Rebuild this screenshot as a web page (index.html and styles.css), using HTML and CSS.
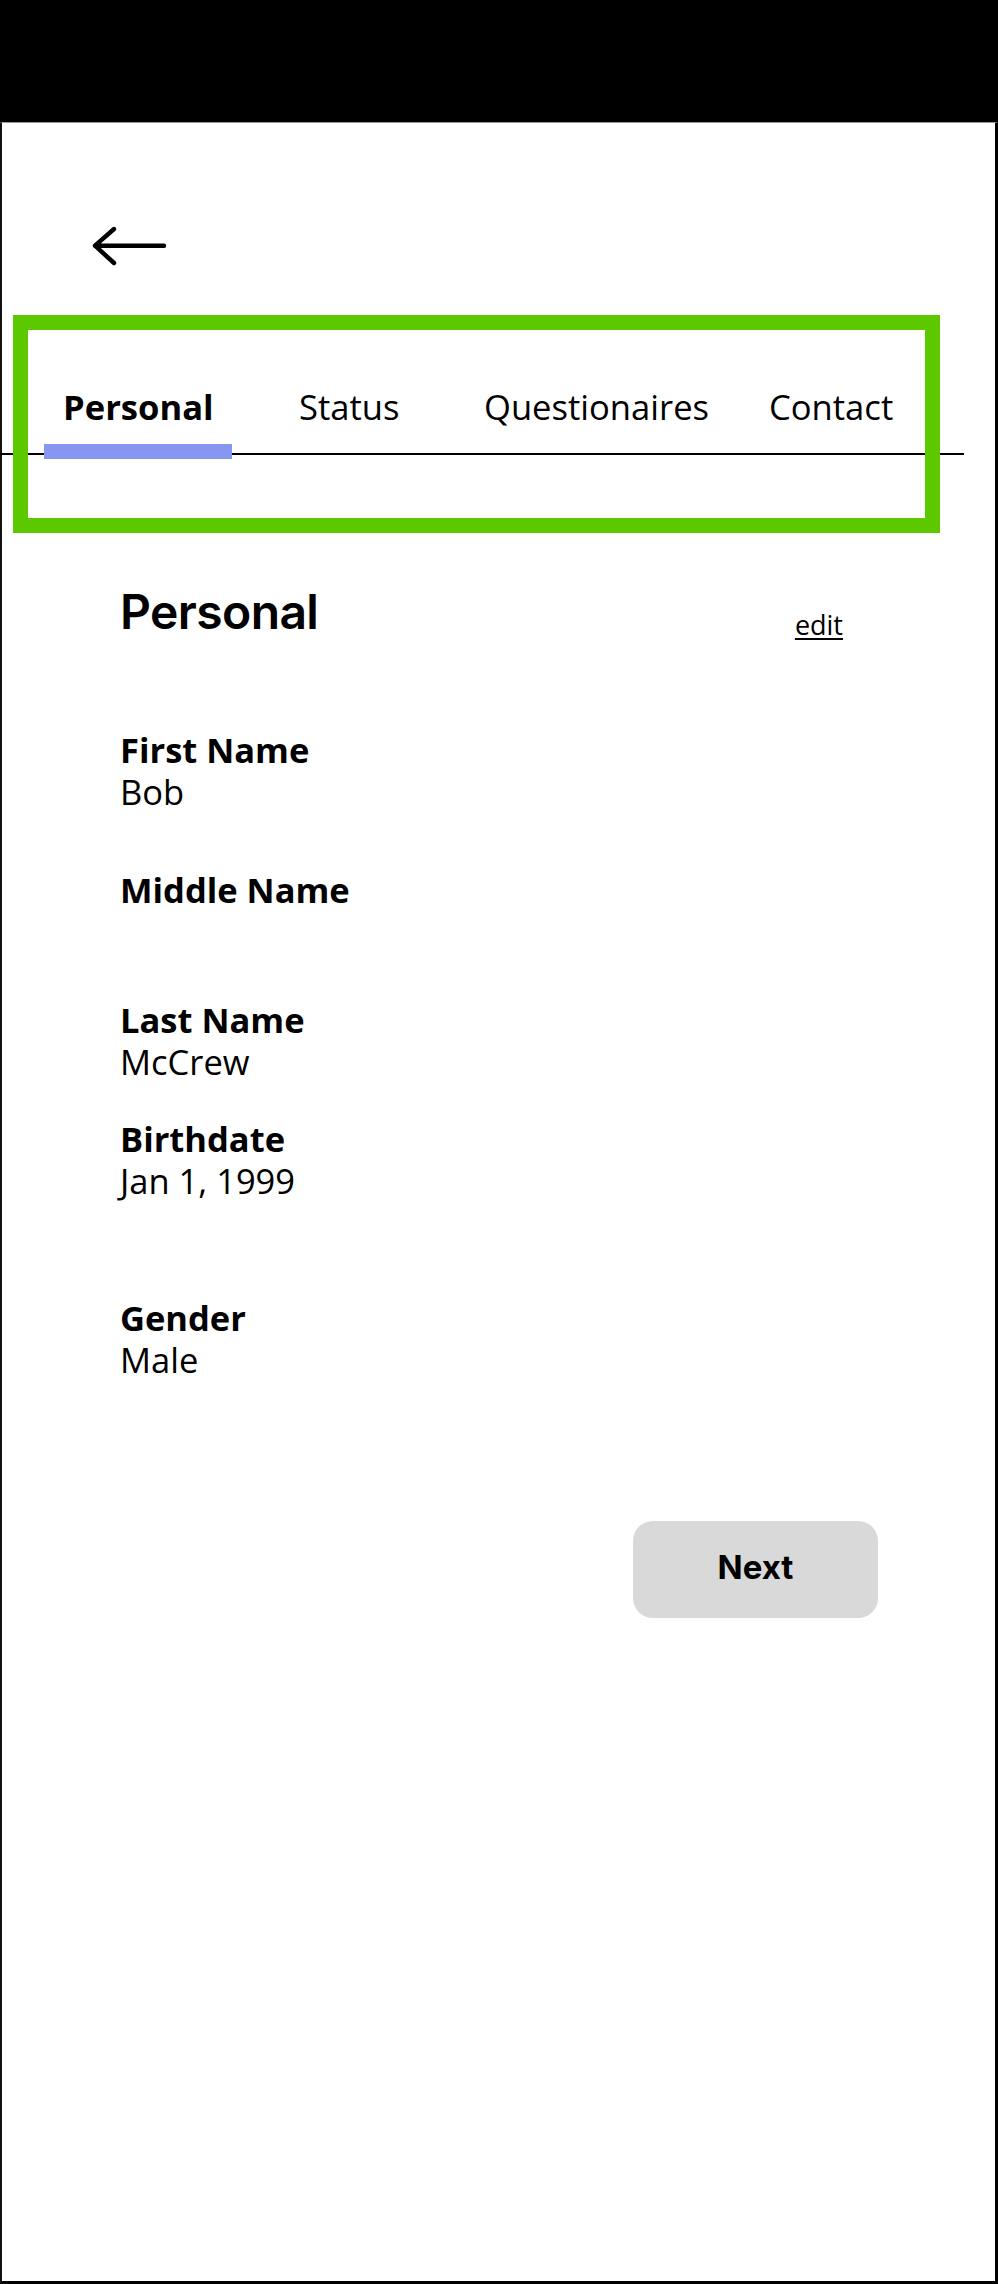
FILE: index.html
```html
<!DOCTYPE html>
<html lang="en">
<head>
<meta charset="utf-8">
<title>Personal</title>
<link rel="stylesheet" href="styles.css">
</head>
<body>
<div class="status-bar"></div>
<div class="screen">
  <div class="back">
    <svg width="80" height="40" viewBox="0 0 80 40" aria-label="Back">
      <path d="M24 3 L5 19.7 L24 37 M5 19.7 H74" fill="none" stroke="#000" stroke-width="4.4" stroke-linecap="round" stroke-linejoin="round"/>
    </svg>
  </div>

  <nav class="tabs">
    <span class="tab active">Personal</span>
    <span class="tab">Status</span>
    <span class="tab">Questionaires</span>
    <span class="tab">Contact</span>
  </nav>

  <div class="highlight"></div>

  <main class="content">
    <div class="head-row">
      <h1 class="title">Personal</h1>
      <a class="edit">edit</a>
    </div>

    <div class="field f-first">
      <div class="label">First Name</div>
      <div class="value">Bob</div>
    </div>
    <div class="field f-middle">
      <div class="label">Middle Name</div>
      <div class="value">&nbsp;</div>
    </div>
    <div class="field f-last">
      <div class="label">Last Name</div>
      <div class="value">McCrew</div>
    </div>
    <div class="field f-birth">
      <div class="label">Birthdate</div>
      <div class="value">Jan 1, 1999</div>
    </div>
    <div class="field f-gender">
      <div class="label">Gender</div>
      <div class="value">Male</div>
    </div>

    <div class="actions">
      <button class="next">Next</button>
    </div>
  </main>
</div>
</body>
</html>
```

FILE: styles.css
```css
html, body {
  margin: 0;
  padding: 0;
}
body {
  background: #000;
  width: 998px;
  height: 2284px;
  overflow: hidden;
  font-family: "Open Sans", "Noto Sans", sans-serif;
  color: #000;
}
.status-bar {
  height: 122px;
  background: #000;
}
.screen {
  position: relative;
  box-sizing: border-box;
  height: 2162px;
  background: #fff;
  border-top: 1px solid #9a9a9a;
  border-left: 2px solid #111;
  border-right: 3px solid #000;
  border-bottom: 3px solid #000;
}
.back {
  padding-top: 103px;
  padding-left: 88px;
}
.back svg {
  display: block;
}
.tabs {
  margin-top: 116.5px;
  margin-left: -2px;
  width: 964px;
  box-sizing: border-box;
  padding-left: 63px;
  padding-bottom: 22.5px;
  border-bottom: 2px solid #000;
  display: grid;
  grid-template-columns: 236px 185px 285px auto;
}
.tab {
  position: relative;
  font-size: 34.6px;
  line-height: 48px;
  font-weight: 400;
  white-space: nowrap;
}
.tab.active {
  font-weight: 700;
}
.tab.active::after {
  content: "";
  position: absolute;
  left: -19px;
  top: 61px;
  width: 188px;
  height: 15px;
  background: #8796f0;
}
.highlight {
  position: absolute;
  left: 11px;
  top: 192px;
  width: 927px;
  height: 218px;
  box-sizing: border-box;
  border: 15px solid #5cc800;
  pointer-events: none;
}
.content {
  padding-left: 118px;
  padding-right: 152px;
}
.head-row {
  display: flex;
  justify-content: space-between;
  align-items: flex-start;
  margin-top: 127.5px;
}
.title {
  margin: 0;
  font-family: Inter, "Noto Sans", sans-serif;
  font-weight: 600;
  font-size: 48px;
  line-height: 58px;
  letter-spacing: -0.6px;
}
.edit {
  margin-top: 24px;
  font-size: 27px;
  line-height: 36px;
  text-decoration: underline;
  text-underline-offset: 3px;
  text-decoration-thickness: 1.5px;
  color: #000;
}
.field .label {
  font-size: 34.5px;
  line-height: 42px;
  font-weight: 700;
}
.field .value {
  font-size: 34.5px;
  line-height: 42px;
  font-weight: 400;
}
.f-first { margin-top: 86.5px; }
.f-middle { margin-top: 56px; }
.f-last { margin-top: 46px; }
.f-birth { margin-top: 35px; }
.f-gender { margin-top: 95px; }
.actions {
  margin-top: 140px;
  padding-left: 513px;
}
.next {
  display: block;
  width: 245px;
  height: 97px;
  border: none;
  border-radius: 20px;
  background: #d9d9d9;
  font-family: Inter, "Noto Sans", sans-serif;
  font-weight: 700;
  font-size: 33px;
  color: #000;
  padding: 0 0 5px 0;
}
```
